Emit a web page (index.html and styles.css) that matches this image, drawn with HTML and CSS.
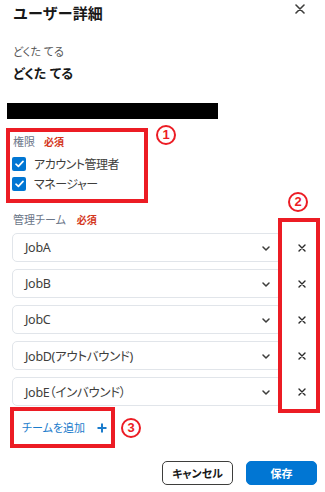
FILE: index.html
```html
<!DOCTYPE html>
<html lang="ja">
<head>
<meta charset="utf-8">
<title>ユーザー詳細</title>
<link rel="stylesheet" href="styles.css">
</head>
<body>
<div class="page">
  <header class="header">
    <h1 class="title">ユーザー詳細</h1>
    <button class="close" aria-label="閉じる">
      <svg width="10" height="10" viewBox="0 0 10 10"><path d="M1 1L9 9M9 1L1 9" stroke="#3e3e3c" stroke-width="1.6" stroke-linecap="round"/></svg>
    </button>
  </header>

  <div class="sub">どくた てる</div>
  <div class="name">どくた てる</div>
  <div class="redacted"></div>

  <div class="field-label perm-label">権限<span class="req">必須</span></div>
  <div class="checks">
    <label class="check"><span class="box"><svg width="9" height="8" viewBox="0 0 9 8"><path d="M1 4.2L3.4 6.4L8 1.4" fill="none" stroke="#fff" stroke-width="1.7" stroke-linecap="round" stroke-linejoin="round"/></svg></span>アカウント管理者</label>
    <label class="check"><span class="box"><svg width="9" height="8" viewBox="0 0 9 8"><path d="M1 4.2L3.4 6.4L8 1.4" fill="none" stroke="#fff" stroke-width="1.7" stroke-linecap="round" stroke-linejoin="round"/></svg></span>マネージャー</label>
  </div>

  <div class="field-label team-label">管理チーム<span class="req">必須</span></div>
  <div class="teams">
    <div class="team-row"><div class="select"><span>JobA</span><svg class="chev" width="8" height="5" viewBox="0 0 8 5"><path d="M1 1L4 4L7 1" fill="none" stroke="#3e3e3c" stroke-width="1.5" stroke-linecap="round" stroke-linejoin="round"/></svg></div><span class="remove"><svg width="8" height="8" viewBox="0 0 8 8"><path d="M1 1L7 7M7 1L1 7" stroke="#2b2b2b" stroke-width="1.4" stroke-linecap="round"/></svg></span></div>
    <div class="team-row"><div class="select"><span>JobB</span><svg class="chev" width="8" height="5" viewBox="0 0 8 5"><path d="M1 1L4 4L7 1" fill="none" stroke="#3e3e3c" stroke-width="1.5" stroke-linecap="round" stroke-linejoin="round"/></svg></div><span class="remove"><svg width="8" height="8" viewBox="0 0 8 8"><path d="M1 1L7 7M7 1L1 7" stroke="#2b2b2b" stroke-width="1.4" stroke-linecap="round"/></svg></span></div>
    <div class="team-row"><div class="select"><span>JobC</span><svg class="chev" width="8" height="5" viewBox="0 0 8 5"><path d="M1 1L4 4L7 1" fill="none" stroke="#3e3e3c" stroke-width="1.5" stroke-linecap="round" stroke-linejoin="round"/></svg></div><span class="remove"><svg width="8" height="8" viewBox="0 0 8 8"><path d="M1 1L7 7M7 1L1 7" stroke="#2b2b2b" stroke-width="1.4" stroke-linecap="round"/></svg></span></div>
    <div class="team-row"><div class="select"><span>JobD(アウトバウンド)</span><svg class="chev" width="8" height="5" viewBox="0 0 8 5"><path d="M1 1L4 4L7 1" fill="none" stroke="#3e3e3c" stroke-width="1.5" stroke-linecap="round" stroke-linejoin="round"/></svg></div><span class="remove"><svg width="8" height="8" viewBox="0 0 8 8"><path d="M1 1L7 7M7 1L1 7" stroke="#2b2b2b" stroke-width="1.4" stroke-linecap="round"/></svg></span></div>
    <div class="team-row"><div class="select"><span>JobE（インバウンド）</span><svg class="chev" width="8" height="5" viewBox="0 0 8 5"><path d="M1 1L4 4L7 1" fill="none" stroke="#3e3e3c" stroke-width="1.5" stroke-linecap="round" stroke-linejoin="round"/></svg></div><span class="remove"><svg width="8" height="8" viewBox="0 0 8 8"><path d="M1 1L7 7M7 1L1 7" stroke="#2b2b2b" stroke-width="1.4" stroke-linecap="round"/></svg></span></div>
  </div>

  <div class="add">チームを追加<svg width="10" height="10" viewBox="0 0 10 10"><path d="M5 0.5V9.5M0.5 5H9.5" stroke="#1b7ccc" stroke-width="2"/></svg></div>

  <div class="actions">
    <button class="btn cancel">キャンセル</button>
    <button class="btn save">保存</button>
  </div>

  <div class="mark box1"></div>
  <div class="mark box2"></div>
  <div class="mark box3"></div>
  <div class="num n1">1</div>
  <div class="num n2">2</div>
  <div class="num n3">3</div>
</div>
</body>
</html>
```
FILE: styles.css
```css
* { box-sizing: border-box; }
html, body { margin: 0; padding: 0; background: #fff; }
body {
  font-family: "Noto Sans", "Noto Sans CJK JP", sans-serif;
  font-feature-settings: "palt";
  color: #181818;
}
.page {
  position: relative;
  width: 325px;
  height: 492px;
  overflow: hidden;
}
.header {
  display: flex;
  justify-content: space-between;
  align-items: flex-start;
  padding: 3px 20px 0 13px;
  height: 23px;
}
.title {
  margin: 0;
  font-size: 15px;
  line-height: 20px;
  font-weight: 700;
  color: #181818;
  font-feature-settings: normal;
}
.close {
  border: 0;
  background: none;
  padding: 0;
  margin-top: 1px;
  width: 10px;
  height: 10px;
  display: flex;
}
.sub {
  margin: 21px 0 0 13px;
  font-size: 11px;
  line-height: 16px;
  color: #555;
}
.name {
  margin: 4px 0 0 13px;
  font-size: 13px;
  line-height: 18px;
  font-weight: 700;
  color: #181818;
}
.redacted {
  margin: 21px 0 0 7px;
  width: 211px;
  height: 16px;
  background: #000;
}
.field-label {
  margin-left: 13px;
  font-size: 11px;
  line-height: 16px;
  color: #6b7688;
  display: flex;
  align-items: center;
}
.perm-label { margin-top: 15px; }
.team-label { margin-top: 18px; }
.req {
  color: #d4371c;
  font-size: 10px;
  font-weight: 700;
  margin-left: 9px;
}
.team-label .req { margin-left: 11px; }
.checks {
  margin: 4px 0 0 12px;
  display: flex;
  flex-direction: column;
}
.check {
  display: flex;
  align-items: center;
  height: 20px;
  font-size: 12px;
  letter-spacing: -0.5px;
  color: #3e3e3c;
}
.box {
  width: 14px;
  height: 14px;
  border-radius: 2px;
  background: #0176d3;
  display: flex;
  align-items: center;
  justify-content: center;
  margin-right: 8px;
}
.teams {
  margin: 5px 0 0 12px;
  display: flex;
  flex-direction: column;
  gap: 7px;
}
.team-row {
  display: flex;
  align-items: center;
}
.select {
  width: 270px;
  height: 29px;
  border: 1px solid #e1e5ea;
  border-radius: 5px;
  display: flex;
  align-items: center;
  justify-content: space-between;
  padding: 0 11px 0 12px;
  font-size: 12.5px;
  letter-spacing: -0.3px;
  color: #3e3e3c;
}
.chev { margin-top: 1px; }
.remove {
  margin-left: 16px;
  width: 8px;
  height: 8px;
  display: flex;
}
.add {
  margin: 13px 0 0 22px;
  display: flex;
  align-items: center;
  gap: 12px;
  font-size: 11px;
  line-height: 18px;
  color: #1b7ccc;
}
.actions {
  margin: 24px 8px 0 0;
  display: flex;
  justify-content: flex-end;
  gap: 13px;
}
.btn {
  width: 71px;
  height: 24px;
  border-radius: 5px;
  font-family: inherit;
  font-feature-settings: "palt";
  font-size: 11px;
  font-weight: 700;
  padding: 0;
}
.cancel {
  background: #fff;
  border: 1px solid #3e3e3c;
  color: #181818;
}
.save {
  background: #0176d3;
  border: 1px solid #0176d3;
  color: #fff;
}
.mark {
  position: absolute;
  border: 4px solid #ec1c24;
}
.box1 { left: 6px; top: 128px; width: 142px; height: 75px; }
.box2 { left: 278px; top: 218px; width: 42px; height: 195px; }
.box3 { left: 10px; top: 407px; width: 105px; height: 41px; }
.num {
  position: absolute;
  width: 20px;
  height: 20px;
  border: 2px solid #ec1c24;
  border-radius: 50%;
  color: #ec1c24;
  font-family: "Liberation Sans", sans-serif;
  font-weight: 700;
  font-size: 13px;
  line-height: 16px;
  text-align: center;
}
.n1 { left: 156px; top: 125px; }
.n2 { left: 288px; top: 192px; }
.n3 { left: 121px; top: 418px; }
```
